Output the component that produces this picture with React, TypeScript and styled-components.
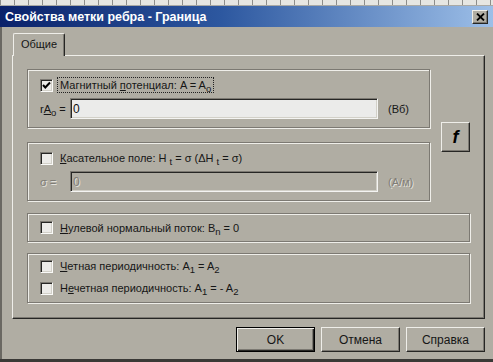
import React from 'react';
import styled, { createGlobalStyle, css } from 'styled-components';

const GRAY = '#b0ada3';
const SHADOW = '#7c7972';
const LIGHT = '#efeee9';
const DARK = '#262624';

const GlobalStyle = createGlobalStyle`
  html, body {
    margin: 0;
    padding: 0;
    background: ${GRAY};
  }
  body {
    font-family: "Liberation Sans", Arial, sans-serif;
    font-size: 11px;
    color: #161616;
  }
`;

const Window = styled.div`
  width: 493px;
  height: 362px;
  background: ${GRAY};
  display: flex;
  flex-direction: column;
  overflow: hidden;
`;

const TopStrip = styled.div`
  height: 6px;
  background: repeating-linear-gradient(90deg, #8d8d8a 0 1px, #e6e6e2 1px 14px);
  border-bottom: 1px solid #a9a9a5;
  box-sizing: border-box;
`;

const TitleBar = styled.div`
  height: 21px;
  display: flex;
  align-items: center;
  justify-content: space-between;
  padding: 0 5px 0 5px;
  background: linear-gradient(90deg, #0a216a 0%, #2d58a0 45%, #9dbfe8 100%);
`;

const Title = styled.span`
  color: #fff;
  font-weight: bold;
  font-size: 12.5px;
`;

const CloseButton = styled.div`
  width: 16px;
  height: 14px;
  box-sizing: border-box;
  background: ${GRAY};
  border: 1px solid;
  border-color: ${LIGHT} ${DARK} ${DARK} ${LIGHT};
  box-shadow: inset -1px -1px 0 ${SHADOW};
  display: flex;
  align-items: center;
  justify-content: center;
`;

const Body = styled.div`
  flex: 1;
  display: flex;
  flex-direction: column;
  padding: 6px 8px 0 12px;
  box-shadow: inset 2px 0 0 #6a6862;
  border-bottom: 3px solid #3a3936;
`;

const TabStrip = styled.div`
  display: flex;
  padding-left: 1px;
`;

const Tab = styled.div`
  position: relative;
  z-index: 1;
  width: 52px;
  height: 23px;
  margin-bottom: -1px;
  box-sizing: border-box;
  background: ${GRAY};
  border-top: 1px solid ${LIGHT};
  border-left: 1px solid ${LIGHT};
  border-right: 1px solid ${DARK};
  border-radius: 2px 2px 0 0;
  box-shadow: inset -1px 0 0 ${SHADOW};
  display: flex;
  align-items: center;
  justify-content: center;
  padding-bottom: 2px;
`;

const Panel = styled.div`
  height: 264px;
  box-sizing: border-box;
  border-top: 1px solid ${LIGHT};
  border-left: 1px solid ${LIGHT};
  border-right: 1px solid ${DARK};
  border-bottom: 1px solid ${DARK};
  box-shadow: inset -1px -1px 0 ${SHADOW};
  padding: 13px 14px 0 14px;
  display: flex;
  flex-direction: column;
`;

const TopRow = styled.div`
  display: flex;
`;

const LeftCol = styled.div`
  width: 403px;
  display: flex;
  flex-direction: column;
  gap: 14px;
`;

const GroupBox = styled.div<{ $mt?: number }>`
  box-sizing: border-box;
  border: 1px solid ${SHADOW};
  box-shadow: inset 1px 1px 0 ${LIGHT}, 1px 1px 0 ${LIGHT};
  display: flex;
  flex-direction: column;
  margin-top: ${(p) => p.$mt ?? 0}px;
`;

const FieldGroup = styled(GroupBox)`
  height: 59px;
  padding: 7px 0 0 12px;
`;

const SingleGroup = styled(GroupBox)`
  height: 29px;
  padding-left: 12px;
  justify-content: center;
`;

const DoubleGroup = styled(GroupBox)`
  height: 50px;
  padding: 4px 0 0 12px;
  gap: 6px;
`;

const CheckRow = styled.div`
  display: flex;
  align-items: center;
  height: 16px;
`;

const CheckBox = styled.div`
  width: 13px;
  height: 13px;
  box-sizing: border-box;
  flex-shrink: 0;
  background: #ecebe8;
  border: 1px solid;
  border-color: ${SHADOW} #fafaf8 #fafaf8 ${SHADOW};
  box-shadow: inset 1px 1px 0 ${DARK}, inset -1px -1px 0 #d2d0c8;
  display: flex;
  align-items: center;
  justify-content: center;
`;

const Label = styled.span<{ $focused?: boolean }>`
  margin-left: 4px;
  padding: 1px 2px;
  border: 1px dotted ${(p) => (p.$focused ? '#222' : 'transparent')};
  white-space: nowrap;
`;

const Key = styled.span`
  text-decoration: underline;
`;

const Sub = styled.sub<{ $gap?: number }>`
  font-size: 9.5px;
  vertical-align: -3px;
  line-height: 0;
  margin-left: ${(p) => p.$gap ?? 0}px;
`;

const disabledText = css`
  color: #807d76;
  text-shadow: 1px 1px 0 #e4e2dc;
`;

const FieldRow = styled.div`
  display: flex;
  align-items: center;
  margin-top: 5px;
`;

const FieldLabel = styled.span<{ $disabled?: boolean }>`
  width: 30px;
  white-space: nowrap;
  ${(p) => p.$disabled && disabledText}
`;

const TextInput = styled.input`
  width: 308px;
  height: 21px;
  box-sizing: border-box;
  margin: 0;
  padding: 1px 2px 0;
  font-family: "Liberation Sans", Arial, sans-serif;
  font-size: 12px;
  color: #111;
  background: #ebebea;
  border: 1px solid;
  border-color: ${SHADOW} #f4f4f2 #f4f4f2 ${SHADOW};
  box-shadow: inset 1px 1px 0 ${DARK}, inset -1px -1px 0 #d2d0c8;
  outline: none;
  &:disabled {
    background: ${GRAY};
    color: #807d76;
    text-shadow: 1px 1px 0 #e4e2dc;
  }
`;

const Unit = styled.span<{ $disabled?: boolean }>`
  margin-left: 10px;
  ${(p) => p.$disabled && disabledText}
`;

const raised = css`
  background: ${GRAY};
  border: 1px solid;
  border-color: ${LIGHT} ${DARK} ${DARK} ${LIGHT};
  box-shadow: inset -1px -1px 0 ${SHADOW};
`;

const FuncButton = styled.div`
  ${raised};
  width: 29px;
  height: 30px;
  box-sizing: border-box;
  margin: 4px 0 0 11px;
  align-self: center;
  display: flex;
  align-items: center;
  justify-content: center;
  font-weight: bold;
  font-style: italic;
  font-size: 18px;
  color: #000;
`;

const ButtonRow = styled.div`
  display: flex;
  justify-content: flex-end;
  gap: 6px;
  margin-top: 8px;
`;

const PushButton = styled.div<{ $default?: boolean }>`
  ${raised};
  width: 79px;
  height: 25px;
  box-sizing: border-box;
  display: flex;
  align-items: center;
  justify-content: center;
  font-size: 12px;
  ${(p) =>
    p.$default &&
    css`
      border: 1px solid #000;
      box-shadow: inset 1px 1px 0 ${LIGHT}, inset -1px -1px 0 ${DARK}, inset -2px -2px 0 ${SHADOW};
    `}
`;

function CheckMark() {
  return (
    <svg width="9" height="9" viewBox="0 0 9 9">
      <path d="M1 4 L3.3 6.5 L8 1.5" stroke="#000" strokeWidth="2" fill="none" />
    </svg>
  );
}

function CloseGlyph() {
  return (
    <svg width="9" height="8" viewBox="0 0 9 8">
      <path d="M1 0.5 L8 7.5 M8 0.5 L1 7.5" stroke="#000" strokeWidth="1.8" />
    </svg>
  );
}

function Check({ checked, children, focused }: { checked?: boolean; children: React.ReactNode; focused?: boolean }) {
  return (
    <CheckRow>
      <CheckBox>{checked && <CheckMark />}</CheckBox>
      <Label $focused={focused}>{children}</Label>
    </CheckRow>
  );
}

export default function App() {
  return (
    <Window>
      <GlobalStyle />
      <TopStrip />
      <TitleBar>
        <Title>Свойства метки ребра - Граница</Title>
        <CloseButton>
          <CloseGlyph />
        </CloseButton>
      </TitleBar>
      <Body>
        <TabStrip>
          <Tab>Общие</Tab>
        </TabStrip>
        <Panel>
          <TopRow>
            <LeftCol>
              <FieldGroup>
                <Check checked focused>
                  Магнитный <Key>п</Key>отенциал: A = A<Sub>o</Sub>
                </Check>
                <FieldRow>
                  <FieldLabel>
                    r<Key>A</Key>
                    <Sub>o</Sub> =
                  </FieldLabel>
                  <TextInput readOnly value="0" />
                  <Unit>(Вб)</Unit>
                </FieldRow>
              </FieldGroup>
              <FieldGroup>
                <Check>
                  <Key>К</Key>асательное поле: H<Sub $gap={3}>t</Sub> = σ (ΔH<Sub $gap={3}>t</Sub> = σ)
                </Check>
                <FieldRow>
                  <FieldLabel $disabled>σ =</FieldLabel>
                  <TextInput disabled value="0" />
                  <Unit $disabled>(А/м)</Unit>
                </FieldRow>
              </FieldGroup>
            </LeftCol>
            <FuncButton>f</FuncButton>
          </TopRow>
          <SingleGroup $mt={12}>
            <Check>
              <Key>Н</Key>улевой нормальный поток: B<Sub>n</Sub> = 0
            </Check>
          </SingleGroup>
          <DoubleGroup $mt={11}>
            <Check>
              <Key>Ч</Key>етная периодичность: A<Sub>1</Sub> = A<Sub>2</Sub>
            </Check>
            <Check>
              Н<Key>е</Key>четная периодичность: A<Sub>1</Sub> = - A<Sub>2</Sub>
            </Check>
          </DoubleGroup>
        </Panel>
        <ButtonRow>
          <PushButton $default>OK</PushButton>
          <PushButton>Отмена</PushButton>
          <PushButton>Справка</PushButton>
        </ButtonRow>
      </Body>
    </Window>
  );
}
